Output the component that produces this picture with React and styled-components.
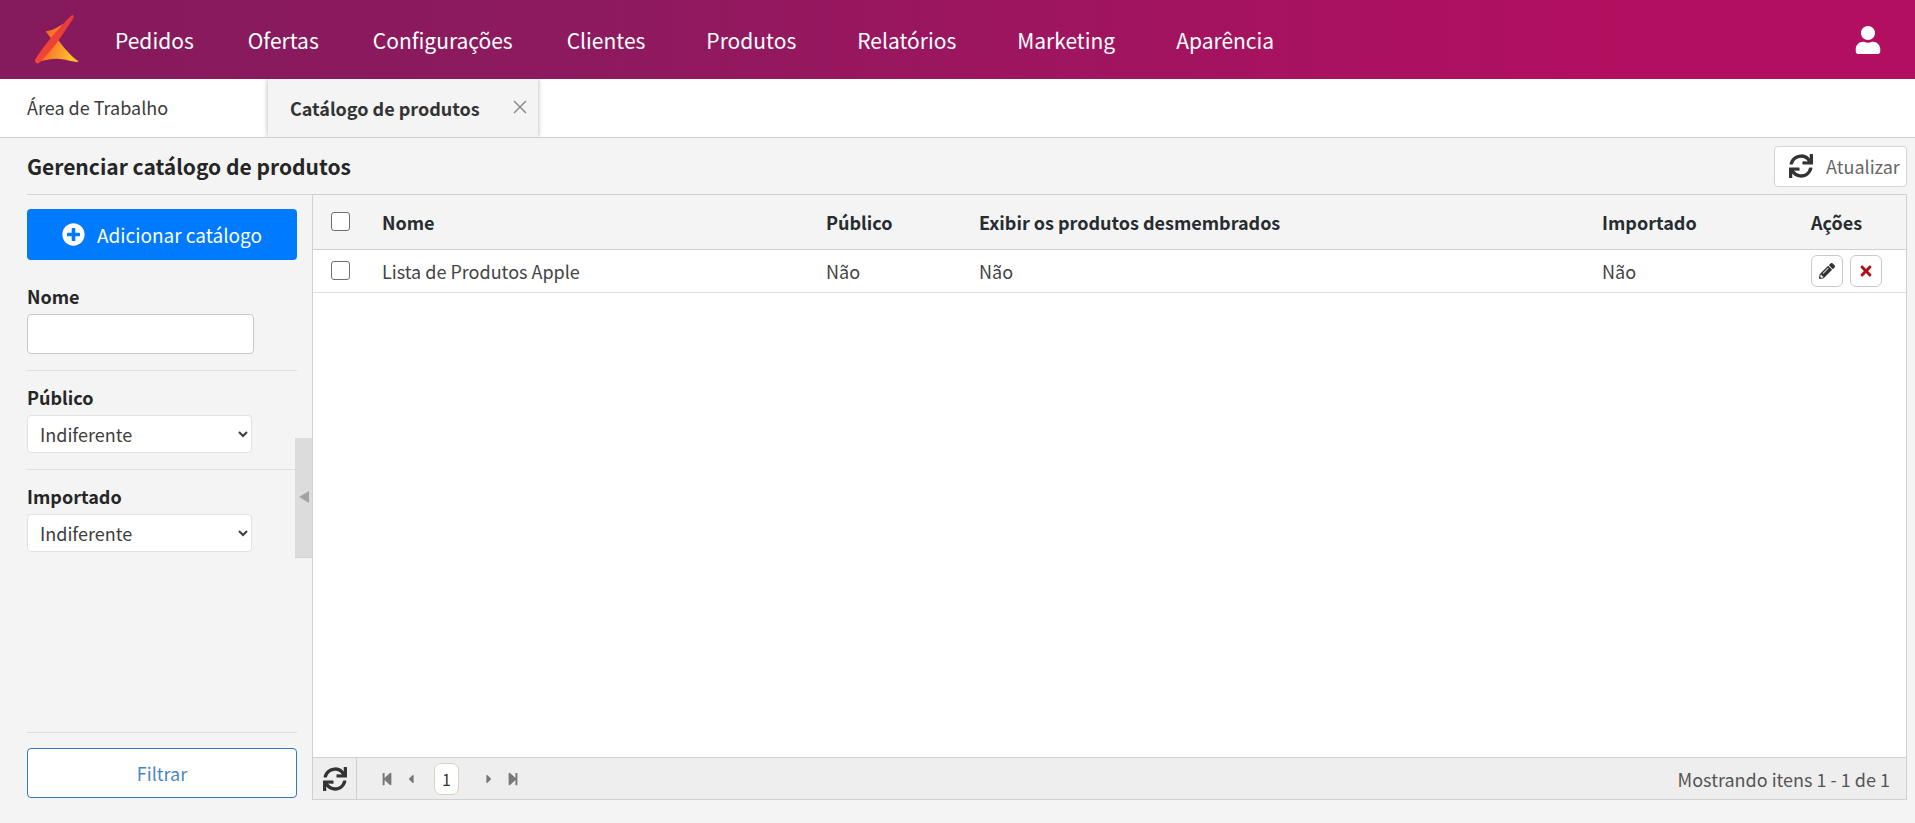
import React from 'react';
import styled, { createGlobalStyle } from 'styled-components';
import {
  FaCaretLeft,
  FaCaretRight,
  FaPencilAlt,
  FaPlusCircle,
  FaStepBackward,
  FaStepForward,
  FaSync,
  FaTimes,
  FaUser,
} from 'react-icons/fa';

const GlobalStyle = createGlobalStyle`
  html, body {
    margin: 0;
    padding: 0;
    height: 100%;
    background: #f4f4f4;
    color: #212529;
    font-family: "Noto Sans CJK SC", "Noto Sans", sans-serif;
  }
  * {
    box-sizing: border-box;
  }
`;

const Page = styled.div`
  display: flex;
  flex-direction: column;
  height: 823px;
  overflow: hidden;
`;

const TopNav = styled.header`
  display: flex;
  align-items: center;
  flex: 0 0 79px;
  padding: 0 33px 0 32px;
  background: linear-gradient(90deg, #851a5c 0%, #8d1a5e 30%, #b30f60 85%, #b30f60 100%);
`;

const Logo = styled.svg`
  flex: 0 0 auto;
  width: 50px;
  height: 52px;
  margin-right: 33px;
`;

const NavLink = styled.a`
  margin-right: ${props => (props.$wide ? '61px' : '54px')};
  color: #fff;
  font-size: 21px;
  line-height: 28px;
  text-decoration: none;
`;

const UserButton = styled.div`
  display: flex;
  margin-left: auto;
  color: #fff;
  font-size: 28px;
`;

const TabBar = styled.div`
  display: flex;
  flex: 0 0 57px;
  padding-left: 27px;
  background: #fff;
  border-bottom: 1px solid #cfcfcf;
`;

const Tab = styled.div`
  display: flex;
  align-items: center;
  width: 241px;
  height: 56px;
  font-size: 18px;
  line-height: 24px;
  color: #3a3a3a;
`;

const ActiveTab = styled.div`
  position: relative;
  display: flex;
  align-items: center;
  width: 270px;
  height: 58px;
  padding-left: 22px;
  background: #f4f4f4;
  box-shadow: 0 0 5px rgba(0, 0, 0, 0.3);
  clip-path: inset(0 -8px 0 -8px);
  font-size: 18px;
  font-weight: 700;
  line-height: 24px;
  color: #333;
`;

const CloseIcon = styled.svg`
  position: absolute;
  top: 20px;
  right: 10px;
  width: 16px;
  height: 16px;
  stroke: #8c8c8c;
  stroke-width: 1.5;
`;

const Heading = styled.div`
  display: flex;
  align-items: center;
  justify-content: space-between;
  flex: 0 0 56px;
  padding: 0 8px 0 27px;
`;

const Title = styled.h1`
  margin: 0;
  font-size: 21px;
  font-weight: 700;
  line-height: 28px;
  color: #262626;
`;

const RefreshButton = styled.button`
  display: flex;
  align-items: center;
  gap: 13px;
  width: 133px;
  height: 41px;
  padding: 0 0 0 14px;
  background: #fff;
  border: 1px solid #d5d5d5;
  border-radius: 4px;
  color: #666;
  font-family: inherit;
  font-size: 18px;
  line-height: 24px;

  svg {
    color: #333;
    font-size: 24px;
  }
`;

const Body = styled.div`
  display: flex;
  flex: 0 0 606px;
  padding: 0 8px 0 27px;
`;

const Sidebar = styled.aside`
  display: flex;
  flex: 0 0 285px;
  border-top: 1px solid #d6d6d6;
`;

const FilterPanel = styled.div`
  display: flex;
  flex-direction: column;
  flex: 0 0 270px;
  padding: 14px 0 2px;
`;

const AddButton = styled.button`
  display: flex;
  align-items: center;
  justify-content: center;
  gap: 12px;
  flex: 0 0 51px;
  margin-bottom: 24px;
  background: #007bff;
  border: 0;
  border-radius: 4px;
  color: #fff;
  font-family: inherit;
  font-size: 19px;
  line-height: 24px;

  svg {
    font-size: 23px;
  }
`;

const Field = styled.div`
  display: flex;
  flex-direction: column;
  padding-bottom: 16px;
  border-bottom: ${props => (props.$last ? '0' : '1px solid #dfdfdf')};
  margin-bottom: 14px;
`;

const FieldLabel = styled.label`
  margin-bottom: 6px;
  font-size: 18px;
  font-weight: 700;
  line-height: 24px;
  color: #262626;
`;

const TextInput = styled.input`
  width: 227px;
  height: 40px;
  background: #fff;
  border: 1px solid #c8c8c8;
  border-radius: 4px;
`;

const Select = styled.select`
  width: 225px;
  height: 38px;
  padding: 0 4px 0 8px;
  background: #fff;
  border: 1px solid #e2e2e2;
  border-radius: 4px;
  color: #3d3d3d;
  font-family: inherit;
  font-size: 18px;
`;

const FilterFooter = styled.div`
  margin-top: auto;
  padding-top: 15px;
  border-top: 1px solid #dcdcdc;
`;

const FilterButton = styled.button`
  display: block;
  width: 100%;
  height: 50px;
  background: #fff;
  border: 1px solid #337ab7;
  border-radius: 4px;
  color: #4a86c5;
  font-family: inherit;
  font-size: 18px;
`;

const Splitter = styled.div`
  display: flex;
  align-items: center;
  justify-content: center;
  align-self: center;
  flex: 0 0 17px;
  height: 120px;
  margin-left: -2px;
  background: #dcdcdc;
  border-bottom: 1px solid #d0d0d0;
`;

const SplitterArrow = styled.span`
  width: 0;
  height: 0;
  border-style: solid;
  border-width: 6px 10px 6px 0;
  border-color: transparent #a3a3a3 transparent transparent;
`;

const GridPanel = styled.section`
  display: flex;
  flex-direction: column;
  flex: 1;
  min-width: 0;
  background: #fff;
  border: 1px solid #d0d0d0;
`;

const GridBody = styled.div`
  flex: 1;
`;

const Table = styled.table`
  width: 100%;
  table-layout: fixed;
  border-collapse: collapse;
`;

const HeadCell = styled.th`
  height: 54px;
  padding: 0;
  background: #f4f4f4;
  border-bottom: 1px solid #cfcfcf;
  font-size: 18px;
  font-weight: 700;
  line-height: 24px;
  text-align: left;
  color: #262c30;
`;

const Cell = styled.td`
  height: 43px;
  padding: 0;
  border-bottom: 1px solid #dedede;
  font-size: 18px;
  line-height: 24px;
  color: #444;
`;

const CheckBox = styled.input`
  display: block;
  width: 19px;
  height: 19px;
  margin: 0 0 0 18px;
  appearance: none;
  background: #fff;
  border: 1px solid #6f6f6f;
  border-radius: 3px;
`;

const Actions = styled.div`
  display: flex;
  gap: 7px;
`;

const ActionButton = styled.button`
  display: flex;
  align-items: center;
  justify-content: center;
  width: 32px;
  height: 32px;
  padding: 0;
  background: #fff;
  border: 1px solid #c9c9c9;
  border-radius: 6px;
  color: ${props => (props.$danger ? '#b00d14' : '#333')};
  font-size: 16px;
`;

const GridFooter = styled.footer`
  display: flex;
  align-items: center;
  flex: 0 0 42px;
  padding-right: 16px;
  background: #eee;
  border-top: 1px solid #d0d0d0;
`;

const FooterRefresh = styled.div`
  display: flex;
  align-items: center;
  justify-content: center;
  align-self: stretch;
  flex: 0 0 44px;
  border-right: 1px solid #d0d0d0;
  color: #333;
  font-size: 24px;
`;

const Pager = styled.nav`
  display: flex;
  align-items: center;
  margin-left: 18px;
  color: #777;
`;

const PagerIcon = styled.span`
  display: flex;
  justify-content: center;
  width: ${props => props.$width || '24px'};
  font-size: 14px;
`;

const PageNumber = styled.span`
  display: flex;
  align-items: center;
  justify-content: center;
  width: 25px;
  height: 32px;
  margin: 0 18px 0 11px;
  background: #fff;
  border: 1px solid #d8d3c0;
  border-radius: 7px;
  color: #333;
  font-size: 16px;
`;

const PagerInfo = styled.span`
  margin-left: auto;
  font-size: 18px;
  line-height: 24px;
  color: #555;
`;

const navItems = [
  { label: 'Pedidos' },
  { label: 'Ofertas' },
  { label: 'Configurações' },
  { label: 'Clientes', wide: true },
  { label: 'Produtos', wide: true },
  { label: 'Relatórios', wide: true },
  { label: 'Marketing', wide: true },
  { label: 'Aparência' },
];

const columns = [
  { label: '', width: 69 },
  { label: 'Nome', width: 444 },
  { label: 'Público', width: 153 },
  { label: 'Exibir os produtos desmembrados', width: 623 },
  { label: 'Importado', width: 209 },
  { label: 'Ações' },
];

const BrandLogo = () => (
  <Logo viewBox="36 36 150 156">
    <defs>
      <linearGradient id="wing" x1="0" y1="0" x2="1" y2="0.4">
        <stop offset="0" stopColor="#f4502c" />
        <stop offset="0.55" stopColor="#f98a27" />
        <stop offset="1" stopColor="#fdc02f" />
      </linearGradient>
      <linearGradient id="stripe" x1="0" y1="1" x2="1" y2="0">
        <stop offset="0" stopColor="#f4472f" />
        <stop offset="1" stopColor="#e53a3f" />
      </linearGradient>
    </defs>
    <path
      d="M77 88 C92 86 108 80 128 66 L112 110 C130 135 155 165 176 178 C170 183 150 176 128 172 C108 168 85 172 62 178 L100 116 C92 108 84 98 77 88 Z"
      fill="url(#wing)"
    />
    <path
      d="M157 38 C163 40 162 46 158 52 C130 95 95 150 56 184 C48 186 43 180 46 172 C75 125 118 75 157 38 Z"
      fill="url(#stripe)"
    />
  </Logo>
);

const App = () => (
  <Page>
    <GlobalStyle />
    <TopNav>
      <BrandLogo />
      {navItems.map(item => (
        <NavLink key={item.label} href="#" $wide={item.wide}>
          {item.label}
        </NavLink>
      ))}
      <UserButton>
        <FaUser />
      </UserButton>
    </TopNav>

    <TabBar>
      <Tab>Área de Trabalho</Tab>
      <ActiveTab>
        Catálogo de produtos
        <CloseIcon viewBox="0 0 16 16">
          <path d="M2 2 L14 14 M14 2 L2 14" />
        </CloseIcon>
      </ActiveTab>
    </TabBar>

    <Heading>
      <Title>Gerenciar catálogo de produtos</Title>
      <RefreshButton>
        <FaSync />
        Atualizar
      </RefreshButton>
    </Heading>

    <Body>
      <Sidebar>
        <FilterPanel>
          <AddButton>
            <FaPlusCircle />
            Adicionar catálogo
          </AddButton>
          <Field>
            <FieldLabel>Nome</FieldLabel>
            <TextInput type="text" />
          </Field>
          <Field>
            <FieldLabel>Público</FieldLabel>
            <Select defaultValue="Indiferente">
              <option>Indiferente</option>
              <option>Sim</option>
              <option>Não</option>
            </Select>
          </Field>
          <Field $last>
            <FieldLabel>Importado</FieldLabel>
            <Select defaultValue="Indiferente">
              <option>Indiferente</option>
              <option>Sim</option>
              <option>Não</option>
            </Select>
          </Field>
          <FilterFooter>
            <FilterButton>Filtrar</FilterButton>
          </FilterFooter>
        </FilterPanel>
        <Splitter>
          <SplitterArrow />
        </Splitter>
      </Sidebar>

      <GridPanel>
        <GridBody>
          <Table>
            <colgroup>
              {columns.map(col => (
                <col key={col.label} style={{ width: col.width }} />
              ))}
            </colgroup>
            <thead>
              <tr>
                <HeadCell>
                  <CheckBox type="checkbox" />
                </HeadCell>
                {columns.slice(1).map(col => (
                  <HeadCell key={col.label}>{col.label}</HeadCell>
                ))}
              </tr>
            </thead>
            <tbody>
              <tr>
                <Cell>
                  <CheckBox type="checkbox" />
                </Cell>
                <Cell>Lista de Produtos Apple</Cell>
                <Cell>Não</Cell>
                <Cell>Não</Cell>
                <Cell>Não</Cell>
                <Cell>
                  <Actions>
                    <ActionButton>
                      <FaPencilAlt />
                    </ActionButton>
                    <ActionButton $danger>
                      <FaTimes />
                    </ActionButton>
                  </Actions>
                </Cell>
              </tr>
            </tbody>
          </Table>
        </GridBody>
        <GridFooter>
          <FooterRefresh>
            <FaSync />
          </FooterRefresh>
          <Pager>
            <PagerIcon>
              <FaStepBackward />
            </PagerIcon>
            <PagerIcon>
              <FaCaretLeft />
            </PagerIcon>
            <PageNumber>1</PageNumber>
            <PagerIcon>
              <FaCaretRight />
            </PagerIcon>
            <PagerIcon>
              <FaStepForward />
            </PagerIcon>
          </Pager>
          <PagerInfo>Mostrando itens 1 - 1 de 1</PagerInfo>
        </GridFooter>
      </GridPanel>
    </Body>
  </Page>
);

export default App;
